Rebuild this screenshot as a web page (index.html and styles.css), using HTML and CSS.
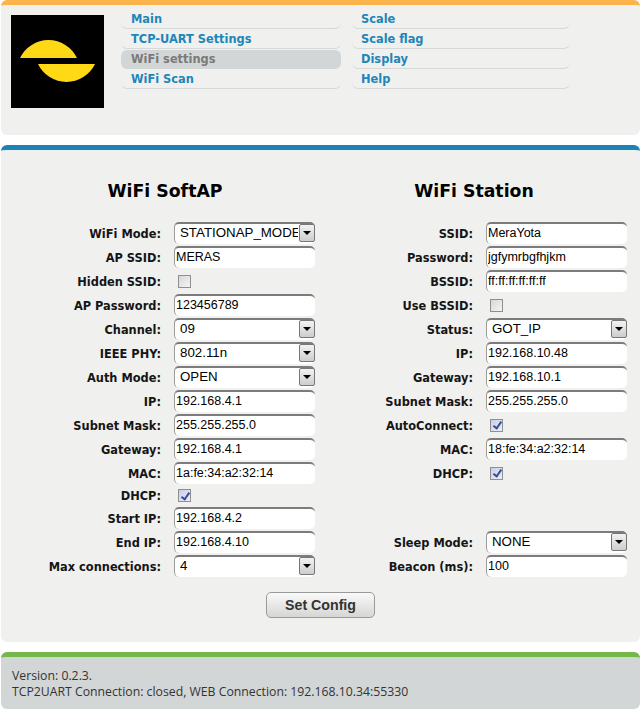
FILE: index.html
```html
<!DOCTYPE html>
<html lang="en">
<head>
<meta charset="utf-8">
<title>WiFi settings</title>
<link rel="stylesheet" href="styles.css">
</head>
<body>
<header class="panel panel-top">
  <svg class="logo" viewBox="0 0 93 93" width="93" height="93" aria-label="logo">
    <rect width="93" height="93" fill="#000"/>
    <path d="M9 43 A31.6 31.6 0 0 1 66 43 Z" fill="#ffd916"/>
    <path d="M27 49 A31.6 31.6 0 0 0 84 49 Z" fill="#ffd916"/>
  </svg>
  <nav class="menu">
    <ul class="menu-col">
      <li><a href="#">Main</a></li>
      <li><a href="#">TCP-UART Settings</a></li>
      <li class="active"><a href="#">WiFi settings</a></li>
      <li><a href="#">WiFi Scan</a></li>
    </ul>
    <ul class="menu-col">
      <li><a href="#">Scale</a></li>
      <li><a href="#">Scale flag</a></li>
      <li><a href="#">Display</a></li>
      <li><a href="#">Help</a></li>
    </ul>
  </nav>
</header>

<main class="panel panel-main">
  <form class="config">
    <div class="columns">
      <section class="col col-ap">
        <h2>WiFi SoftAP</h2>
        <div class="row"><label>WiFi Mode:</label><span class="sel"><select><option>STATIONAP_MODE</option></select><i class="arrow"></i></span></div>
        <div class="row"><label>AP SSID:</label><input type="text" value="MERAS"></div>
        <div class="row"><label>Hidden SSID:</label><input type="checkbox"></div>
        <div class="row"><label>AP Password:</label><input type="text" value="123456789"></div>
        <div class="row"><label>Channel:</label><span class="sel"><select><option>09</option></select><i class="arrow"></i></span></div>
        <div class="row"><label>IEEE PHY:</label><span class="sel"><select><option>802.11n</option></select><i class="arrow"></i></span></div>
        <div class="row"><label>Auth Mode:</label><span class="sel"><select><option>OPEN</option></select><i class="arrow"></i></span></div>
        <div class="row"><label>IP:</label><input type="text" value="192.168.4.1"></div>
        <div class="row"><label>Subnet Mask:</label><input type="text" value="255.255.255.0"></div>
        <div class="row"><label>Gateway:</label><input type="text" value="192.168.4.1"></div>
        <div class="row"><label>MAC:</label><input type="text" value="1a:fe:34:a2:32:14"></div>
        <div class="row row-short"><label>DHCP:</label><input type="checkbox" checked></div>
        <div class="row"><label>Start IP:</label><input type="text" value="192.168.4.2"></div>
        <div class="row"><label>End IP:</label><input type="text" value="192.168.4.10"></div>
        <div class="row"><label>Max connections:</label><span class="sel"><select><option>4</option></select><i class="arrow"></i></span></div>
      </section>
      <section class="col col-sta">
        <h2>WiFi Station</h2>
        <div class="row"><label>SSID:</label><input type="text" value="MeraYota"></div>
        <div class="row"><label>Password:</label><input type="text" value="jgfymrbgfhjkm"></div>
        <div class="row"><label>BSSID:</label><input type="text" value="ff:ff:ff:ff:ff:ff"></div>
        <div class="row"><label>Use BSSID:</label><input type="checkbox"></div>
        <div class="row"><label>Status:</label><span class="sel"><select><option>GOT_IP</option></select><i class="arrow"></i></span></div>
        <div class="row"><label>IP:</label><input type="text" value="192.168.10.48"></div>
        <div class="row"><label>Gateway:</label><input type="text" value="192.168.10.1"></div>
        <div class="row"><label>Subnet Mask:</label><input type="text" value="255.255.255.0"></div>
        <div class="row"><label>AutoConnect:</label><input type="checkbox" checked></div>
        <div class="row"><label>MAC:</label><input type="text" value="18:fe:34:a2:32:14"></div>
        <div class="row"><label>DHCP:</label><input type="checkbox" checked></div>
        <div class="spacer"></div>
        <div class="row"><label>Sleep Mode:</label><span class="sel"><select><option>NONE</option></select><i class="arrow"></i></span></div>
        <div class="row"><label>Beacon (ms):</label><input type="text" value="100"></div>
      </section>
    </div>
    <div class="actions"><button type="button">Set Config</button></div>
  </form>
</main>

<footer class="panel panel-foot">
  <p>Version: 0.2.3.</p>
  <p>TCP2UART Connection: closed, WEB Connection: 192.168.10.34:55330</p>
</footer>
</body>
</html>
```

FILE: styles.css
```css
html, body { margin: 0; padding: 0; background: #fff; }
body { padding: 0 1px; font-family: "DejaVu Sans", sans-serif; color: #000; }

.panel { background: #f0f0ee; border-radius: 6px; box-sizing: border-box; }
.panel-top {
  height: 135px;
  border-top: 5px solid #fbb34c;
  display: flex; align-items: flex-start;
  padding: 10px 0 0 10px;
}
.logo { display: block; flex: none; }

.menu { display: flex; gap: 11px; margin: -6px 0 0 17px; }
.menu-col { list-style: none; margin: 0; padding: 0; width: 220px; }
.menu-col + .menu-col { width: 218px; }
.menu-col + .menu-col a { padding-left: 9px; }
.menu-col li { height: 20px; box-sizing: border-box; border-bottom: 1px solid #d5d9d9; border-radius: 0 0 6px 6px; }
.menu-col a { display: block; box-sizing: border-box; padding: 2px 0 0 10px; font-size: 11.4px; font-weight: 700; line-height: 17px; color: #1e86b9; text-decoration: none; }
.menu-col li.active { background: #d3d6d6; border-bottom: 0; border-radius: 6px; height: 19px; margin-top: 1px; }
.menu-col li.active a { color: #7a7a7a; padding-top: 1px; line-height: 17px; }

.panel-main {
  margin-top: 10px; height: 497px;
  border-top: 5px solid #1b84b7;
}
.columns { display: flex; }
.col-ap { width: 312px; }
.col-sta { width: 312px; }
h2 { margin: 0; font-size: 17.3px; font-weight: 700; line-height: 26px; text-align: center; color: #000; }
.col-ap h2 { padding: 28px 0 17px 16px; }
.col-sta h2 { padding: 28px 0 17px 10px; }

.row { display: flex; align-items: center; height: 24px; }
.row-short { height: 21px; }
.spacer { height: 45px; }
.row label {
  flex: none; box-sizing: border-box; width: 160px; padding-top: 1px; text-align: right;
  font-size: 11.4px; font-weight: 700; color: #151515;
}
.row input[type=text], .sel select {
  box-sizing: border-box; width: 141px; height: 22px; margin: 0;
  background: #fff; color: #000;
  border: 0; border-top: 2px solid #7c7c7c; border-left: 1px solid #9a9a9a;
  border-radius: 5px; outline: 0;
  font-family: "Liberation Sans", sans-serif; font-size: 12.5px;
}
.row input[type=text] { margin-left: 13px; padding: 0 0 2px 1px; }
.sel { position: relative; display: block; margin-left: 13px; width: 141px; height: 22px; flex: none; }
.sel select { display: block; appearance: none; -webkit-appearance: none; padding: 0 17px 3px 5px; font-size: 13.3px; }
.arrow {
  position: absolute; right: 0; top: 2px; width: 16px; height: 18px;
  box-sizing: border-box; border: 1px solid #777; border-radius: 2px;
  background: linear-gradient(#f2f2f2, #cdcdcd);
}
.arrow::after {
  content: ""; position: absolute; left: 3px; top: 6px;
  border-style: solid; border-width: 4px 4px 0; border-color: #000 transparent transparent;
}
input[type=checkbox] {
  appearance: none; -webkit-appearance: none; box-sizing: border-box;
  width: 13px; height: 13px; margin: 0 0 0 17px; flex: none; position: relative;
  border: 1px solid #8e8f8f; border-radius: 0;
  background: linear-gradient(135deg, #d8d8d8, #f4f4f4);
}
input[type=checkbox]:checked { background: linear-gradient(135deg, #c9cde4, #eceef8); }
input[type=checkbox]:checked::after {
  content: ""; position: absolute; left: 3.5px; top: 0.5px; width: 3px; height: 7px;
  border: solid #3c4a9c; border-width: 0 2px 2px 0; transform: rotate(35deg);
}

.actions { display: flex; justify-content: center; margin-top: 14px; }
button {
  width: 109px; height: 26px;
  border: 1px solid #9a9a9a; border-radius: 5px;
  background: linear-gradient(#fafafa, #e6e6e4 55%, #d6d6d4);
  font-family: "Liberation Sans", sans-serif; font-size: 14.2px; font-weight: 700; color: #333;
}

.panel-foot {
  margin-top: 10px; height: 57px;
  background: #d3d6d6; border-top: 5px solid #74b74a;
  padding: 11px 0 0 11px;
  font-family: "Open Sans", sans-serif; font-size: 12.25px; line-height: 16px; color: #333;
}
.panel-foot p { margin: 0; }
```
